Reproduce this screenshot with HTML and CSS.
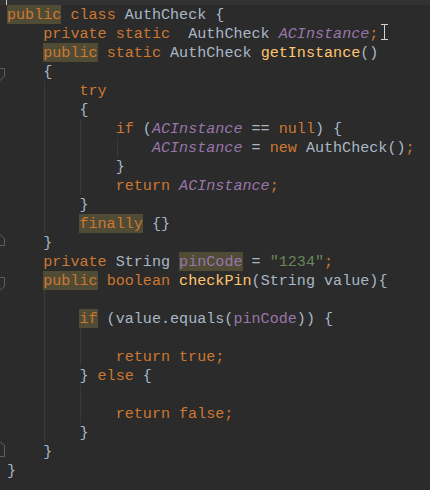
FILE: index.html
```html
<!DOCTYPE html>
<html>
<head>
<meta charset="utf-8">
<link rel="stylesheet" href="styles.css">
</head>
<body>
<div class="editor">
  <div class="caretline"><span class="caret"></span></div>

  <div class="line"><span class="gut"></span><span class="code"><span class="hl kw">public</span><span class="kw"> class</span> AuthCheck {</span></div>
  <div class="line"><span class="gut"></span><span class="code"><span class="ind"></span><span class="kw">private static</span>  AuthCheck <span class="sf">ACInstance</span><span class="kw">;</span></span></div>
  <div class="line"><span class="gut"></span><span class="code"><span class="ind"></span><span class="hl kw">public</span><span class="kw"> static</span> AuthCheck <span class="fn">getInstance</span>()</span></div>
  <div class="line"><span class="gut"><svg class="fold" viewBox="0 0 7 19"><polyline points="0,6.5 4.5,6.5 4.5,14.5 0,18.5"/></svg></span><span class="code"><span class="ind"></span>{</span></div>
  <div class="line"><span class="gut"></span><span class="code"><span class="ind"></span><span class="ind g"></span><span class="kw">try</span></span></div>
  <div class="line"><span class="gut"></span><span class="code"><span class="ind"></span><span class="ind g"></span>{</span></div>
  <div class="line"><span class="gut"></span><span class="code"><span class="ind"></span><span class="ind g"></span><span class="ind g"></span><span class="kw">if</span> (<span class="sf">ACInstance</span> == <span class="kw">null</span>) {</span></div>
  <div class="line"><span class="gut"></span><span class="code"><span class="ind"></span><span class="ind g"></span><span class="ind g"></span><span class="ind g"></span><span class="sf">ACInstance</span> = <span class="kw">new</span> AuthCheck()<span class="kw">;</span></span></div>
  <div class="line"><span class="gut"></span><span class="code"><span class="ind"></span><span class="ind g"></span><span class="ind g"></span>}</span></div>
  <div class="line"><span class="gut"></span><span class="code"><span class="ind"></span><span class="ind g"></span><span class="ind g"></span><span class="kw">return</span> <span class="sf">ACInstance</span><span class="kw">;</span></span></div>
  <div class="line"><span class="gut"></span><span class="code"><span class="ind"></span><span class="ind g"></span>}</span></div>
  <div class="line"><span class="gut"></span><span class="code"><span class="ind"></span><span class="ind g"></span><span class="hl kw">finally</span> {}</span></div>
  <div class="line"><span class="gut"><svg class="fold" viewBox="0 0 7 19"><polyline points="0,1.5 4.5,5.5 4.5,12.5 0,12.5"/></svg></span><span class="code"><span class="ind"></span>}</span></div>
  <div class="line"><span class="gut"></span><span class="code"><span class="ind"></span><span class="kw">private</span> String <span class="hl pf">pinCode</span> = <span class="str">"1234"</span><span class="kw">;</span></span></div>
  <div class="line"><span class="gut"><svg class="fold" viewBox="0 0 7 19"><polyline points="0,6.5 4.5,6.5 4.5,15.5 0,19"/></svg></span><span class="code"><span class="ind"></span><span class="hl kw">public</span><span class="kw"> boolean</span> <span class="fn">checkPin</span>(String value){</span></div>
  <div class="line"><span class="gut"></span><span class="code"><span class="ind"></span><span class="ind g"></span></span></div>
  <div class="line"><span class="gut"></span><span class="code"><span class="ind"></span><span class="ind g"></span><span class="hl kw">if</span> (value.equals(<span class="pf">pinCode</span>)) {</span></div>
  <div class="line"><span class="gut"></span><span class="code"><span class="ind"></span><span class="ind g"></span><span class="ind g"></span></span></div>
  <div class="line"><span class="gut"></span><span class="code"><span class="ind"></span><span class="ind g"></span><span class="ind g"></span><span class="kw">return true;</span></span></div>
  <div class="line"><span class="gut"></span><span class="code"><span class="ind"></span><span class="ind g"></span>} <span class="kw">else</span> {</span></div>
  <div class="line"><span class="gut"></span><span class="code"><span class="ind"></span><span class="ind g"></span><span class="ind g"></span></span></div>
  <div class="line"><span class="gut"></span><span class="code"><span class="ind"></span><span class="ind g"></span><span class="ind g"></span><span class="kw">return false;</span></span></div>
  <div class="line"><span class="gut"></span><span class="code"><span class="ind"></span><span class="ind g"></span>}</span></div>
  <div class="line"><span class="gut"><svg class="fold" viewBox="0 0 7 19"><polyline points="0,0 4.5,3.5 4.5,14.5 0,14.5"/></svg></span><span class="code"><span class="ind"></span>}</span></div>
  <div class="line"><span class="gut"></span><span class="code">}</span></div>

  <svg class="mouse" viewBox="0 0 9 18"><path d="M1 1.5H8M4.5 1.5V16.5M1 16.5H8"/></svg>
</div>
</body>
</html>
```

FILE: styles.css
```css
html, body {
  margin: 0;
  padding: 0;
  background: #2b2b2b;
}

.editor {
  position: relative;
  width: 430px;
  height: 490px;
  overflow: hidden;
  background: #2b2b2b;
  font-family: "Liberation Mono", "DejaVu Sans Mono", monospace;
  font-size: 15.1px;
  line-height: 19px;
  color: #a9b7c6;
}

.caretline {
  height: 5px;
  background: #323232;
  display: flex;
}

.caret {
  margin-left: 6px;
  width: 1px;
  height: 5px;
  background: #c8c8c8;
}

.line {
  display: flex;
  height: 19px;
}

.gut {
  flex: none;
  width: 7px;
  height: 19px;
}

.fold {
  display: block;
  width: 7px;
  height: 19px;
  overflow: visible;
}

.fold polyline {
  fill: none;
  stroke: #5e5e5e;
  stroke-width: 1;
}

.code {
  white-space: pre;
  height: 19px;
  line-height: 21px;
}

.ind {
  display: inline-block;
  width: 4ch;
  height: 19px;
  vertical-align: top;
}

.ind.g {
  background: linear-gradient(#3a3a3a, #3a3a3a) no-repeat 1px 0 / 1px 100%;
}

.hl {
  display: inline-block;
  height: 19px;
  vertical-align: top;
  background: #4f4b35;
}

.kw { color: #cc7832; }
.fn { color: #ffc66d; }
.str { color: #6a8759; }
.sf { color: #9876aa; font-style: italic; }
.pf { color: #9876aa; }

.mouse {
  position: absolute;
  left: 380px;
  top: 23px;
  width: 9px;
  height: 18px;
}

.mouse path {
  fill: none;
  stroke: #d2d2d2;
  stroke-width: 1;
}
```
